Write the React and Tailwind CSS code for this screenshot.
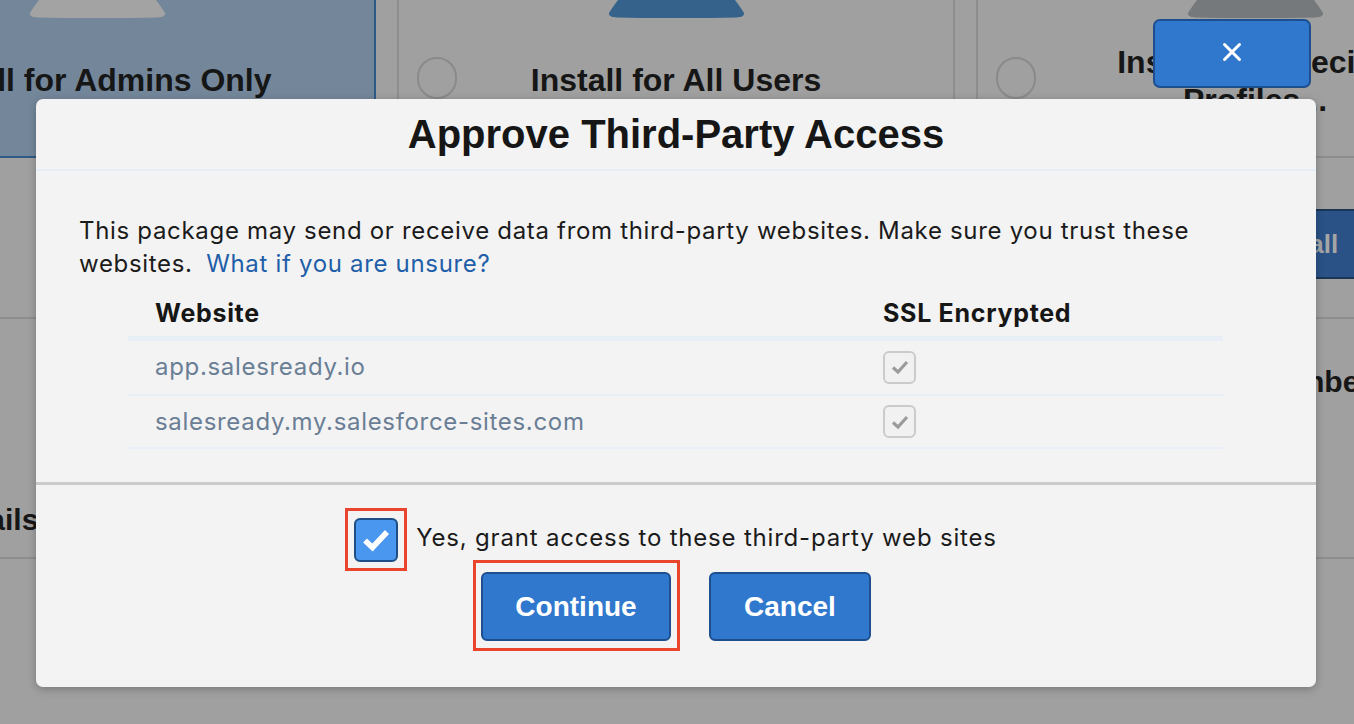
import React from 'react';
import { X } from 'lucide-react';

const sites = [
  { url: 'app.salesready.io', ssl: true, rowH: 'h-[57px]' },
  { url: 'salesready.my.salesforce-sites.com', ssl: true, rowH: 'h-[53px]' },
];

const Bell = ({ color }) => (
  <svg width="137" height="18" viewBox="0 0 137 18" className="mx-auto block">
    <path d="M10 0 H127 Q133 8 136 13 Q137 17 128 17.5 Q68 19 9 17.5 Q0 17 1 13 Q4 8 10 0 Z" fill={color} />
  </svg>
);

const InstallCard = ({ label, selected, shape, pad }) => (
  <div
    className={
      selected
        ? 'relative w-[558px] h-[160px] shrink-0 bg-[#74879a] border-2 border-[#2f5a88]'
        : 'relative w-[558px] h-[160px] shrink-0 border-2 border-[#8d8d8d]'
    }
  >
    <Bell color={shape} />
    {!selected && (
      <div className="absolute left-[18px] top-[57px] w-[40px] h-[42px] rounded-full border-2 border-[#8a8a8a]" />
    )}
    <div className={`${pad} text-center text-[32px] leading-[38px] font-bold text-[#161616] font-['Liberation_Sans',sans-serif]`}>
      {label}
    </div>
  </div>
);

const SmallCheck = () => (
  <div className="w-[33px] h-[33px] rounded-[6px] border-2 border-[#cbcbcb] bg-[#f1f1f1] flex items-center justify-center">
    <svg width="20" height="16" viewBox="0 0 20 16">
      <path d="M3 8.5 L8 13 L17 3" fill="none" stroke="#9b9b9b" strokeWidth="3.2" />
    </svg>
  </div>
);

const App = () => {
  return (
    <div className="relative w-[1354px] h-[724px] overflow-hidden bg-[#a0a0a0] font-['Inter',sans-serif]">
      {/* dimmed page behind the dialog */}
      <div className="flex gap-[21px] -ml-[182px] -mt-[2px]">
        <InstallCard label="Install for Admins Only" selected shape="#a3a3a3" pad="mt-[43px] px-[20px]" />
        <InstallCard label="Install for All Users" shape="#34628b" pad="mt-[43px] px-[110px]" />
        <InstallCard label="Install for Specific Profiles..." shape="#76797b" pad="mt-[25px] px-[110px]" />
      </div>

      <div className="h-[161px] border-b-2 border-[#8e8e8e] flex justify-end items-start pt-[51px]">
        <div className="w-[200px] h-[70px] -mr-[90px] bg-[#2a5286] border-2 border-[#1c3556] rounded-[4px] flex items-center pl-[17px] text-[26px] font-bold text-[#a5a5a5] font-['Liberation_Sans',sans-serif]">
          Install
        </div>
      </div>

      <div className="h-[240px] border-b-2 border-[#8e8e8e] flex justify-between font-['Liberation_Sans',sans-serif] text-[30px] font-bold text-[#161616]">
        <div className="self-end mb-[15px] -ml-[60px]">Details</div>
        <div className="mt-[40px] -mr-[17px]">Number</div>
      </div>

      {/* close button */}
      <button className="absolute left-[1153px] top-[19px] w-[158px] h-[69px] rounded-[7px] bg-[#3078ce] border-2 border-[#1d4f8f] flex items-start justify-center pt-[16px]">
        <X size={30} color="#ffffff" strokeWidth={2.4} />
      </button>

      {/* dialog */}
      <div className="absolute left-[36px] top-[99px] w-[1280px] h-[588px] rounded-[7px] bg-[#f3f3f3] shadow-[0_2px_8px_rgba(0,0,0,0.25)] flex flex-col">
        <div className="h-[72px] border-b-2 border-[#e6eef7] flex items-center justify-center">
          <h2 className="text-[40px] font-bold text-[#161616] font-['Liberation_Sans',sans-serif]">
            Approve Third-Party Access
          </h2>
        </div>

        <div className="flex-1 pt-[43px] px-[43px]">
          <p className="text-[24px] leading-[33px] tracking-[0.68px] text-[#1b1b1b]">
            This package may send or receive data from third-party websites. Make sure you trust these websites.{' '}
            <a className="ml-[6px] text-[#1f5ea8]">What if you are unsure?</a>
          </p>

          <table className="mt-[11px] ml-[49px] w-[1095px] text-left text-[24px] tracking-[0.68px]">
            <thead>
              <tr className="border-b-[5px] border-[#e7eef6]">
                <th className="pl-[27px] h-[47px] text-[25px] tracking-[0.7px] font-bold text-[#161616] w-[755px]">Website</th>
                <th className="h-[47px] text-[25px] tracking-[0.7px] font-bold text-[#161616]">SSL Encrypted</th>
              </tr>
            </thead>
            <tbody>
              {sites.map((s) => (
                <tr key={s.url} className="border-b-2 border-[#e7eef6]">
                  <td className={`pl-[27px] ${s.rowH} text-[#6a7e95]`}>{s.url}</td>
                  <td className={s.rowH}>{s.ssl && <SmallCheck />}</td>
                </tr>
              ))}
            </tbody>
          </table>
        </div>

        <div className="h-[205px] border-t-[3px] border-[#cbcbcb] flex flex-col items-center pt-[23px]">
          <label className="flex items-center gap-[9px] -ml-[10px]">
            <span className="border-[3px] border-[#e8452c] p-[6px] pt-[7px]">
              <span className="w-[44px] h-[44px] rounded-[6px] bg-[#4a97ef] border-2 border-[#1f4d86] flex items-center justify-center">
                <svg width="30" height="24" viewBox="0 0 30 24">
                  <path d="M4 12.5 L11.5 19.5 L26 4" fill="none" stroke="#ffffff" strokeWidth="5.5" />
                </svg>
              </span>
            </span>
            <span className="text-[24px] tracking-[0.8px] text-[#1b1b1b] -mt-[3px]">
              Yes, grant access to these third-party web sites
            </span>
          </label>

          <div className="flex items-start gap-[29px] -mt-[11px] -ml-[8px]">
            <span className="border-[3px] border-[#e8452c] pl-[5px] pr-[6px] pt-[9px] pb-[7px]">
              <button className="w-[190px] h-[69px] rounded-[6px] bg-[#3078ce] border-2 border-[#1d4f8f] text-white text-[28px] font-bold font-['Liberation_Sans',sans-serif]">
                Continue
              </button>
            </span>
            <button className="mt-[12px] w-[162px] h-[69px] rounded-[6px] bg-[#3078ce] border-2 border-[#1d4f8f] text-white text-[28px] font-bold font-['Liberation_Sans',sans-serif]">
              Cancel
            </button>
          </div>
        </div>
      </div>
    </div>
  );
};

export default App;
